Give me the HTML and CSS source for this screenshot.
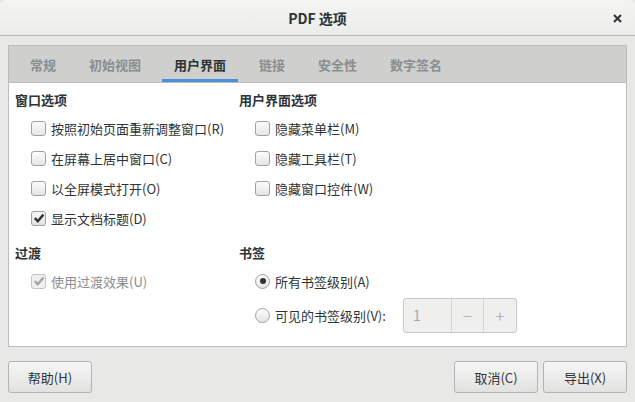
FILE: index.html
```html
<!DOCTYPE html>
<html lang="zh-CN">
<head>
<meta charset="utf-8">
<link rel="stylesheet" href="styles.css">
</head>
<body>
<div class="window">
  <div class="titlebar">
    <span class="title">PDF 选项</span>
    <span class="close">
      <svg width="9" height="9" viewBox="0 0 9 9"><path d="M1 1 L8 8 M8 1 L1 8" stroke="#2e3436" stroke-width="2" stroke-linecap="butt"/></svg>
    </span>
  </div>
  <div class="body">
    <div class="notebook">
      <div class="tabs">
        <span class="tab">常规</span>
        <span class="tab">初始视图</span>
        <span class="tab active">用户界面</span>
        <span class="tab">链接</span>
        <span class="tab">安全性</span>
        <span class="tab">数字签名</span>
      </div>
      <div class="page">
        <div class="grid">
          <div class="col">
            <div class="heading">窗口选项</div>
            <div class="rows">
              <div class="row"><span class="check"></span><span>按照初始页面重新调整窗口(R)</span></div>
              <div class="row"><span class="check"></span><span>在屏幕上居中窗口(C)</span></div>
              <div class="row"><span class="check"></span><span>以全屏模式打开(O)</span></div>
              <div class="row"><span class="check checked"><svg width="12" height="12" viewBox="0 0 12 12"><path d="M1.8 6.2 L4.8 9.2 L10.4 2.6" fill="none" stroke="#2e3436" stroke-width="2.4"/></svg></span><span>显示文档标题(D)</span></div>
            </div>
          </div>
          <div class="col">
            <div class="heading">用户界面选项</div>
            <div class="rows">
              <div class="row"><span class="check"></span><span>隐藏菜单栏(M)</span></div>
              <div class="row"><span class="check"></span><span>隐藏工具栏(T)</span></div>
              <div class="row"><span class="check"></span><span>隐藏窗口控件(W)</span></div>
            </div>
          </div>
          <div class="col section2">
            <div class="heading">过渡</div>
            <div class="rows">
              <div class="row disabled"><span class="check checked"><svg width="12" height="12" viewBox="0 0 12 12"><path d="M1.8 6.2 L4.8 9.2 L10.4 2.6" fill="none" stroke="#a4a6a6" stroke-width="2.4"/></svg></span><span>使用过渡效果(U)</span></div>
            </div>
          </div>
          <div class="col section2">
            <div class="heading">书签</div>
            <div class="rows">
              <div class="row"><span class="radio on"></span><span>所有书签级别(A)</span></div>
              <div class="row tall"><span class="radio"></span><span>可见的书签级别(V):</span>
                <div class="spin">
                  <span class="spin-entry">1</span>
                  <span class="spin-btn">−</span>
                  <span class="spin-btn">+</span>
                </div>
              </div>
            </div>
          </div>
        </div>
      </div>
    </div>
    <div class="buttons">
      <button class="btn">帮助(H)</button>
      <span class="spacer"></span>
      <button class="btn">取消(C)</button>
      <button class="btn">导出(X)</button>
    </div>
  </div>
</div>
</body>
</html>
```

FILE: styles.css
```css
* { box-sizing: border-box; }
html, body { margin: 0; padding: 0; }
body {
  width: 635px;
  height: 402px;
  background: #e8e8e7;
  font-family: "Noto Sans CJK SC", "Noto Sans", sans-serif;
  font-size: 13px;
  color: #2e3436;
  overflow: hidden;
}
.window { display: flex; flex-direction: column; height: 402px; }
.titlebar {
  height: 36px;
  flex: none;
  background: linear-gradient(#f4f4f3, #ececeb);
  border-bottom: 1px solid #b6b6b3;
  border-radius: 6px 6px 0 0;
  display: flex;
  align-items: center;
  justify-content: center;
  position: relative;
}
.title { font-size: 14px; font-weight: 600; color: #2e3436; }
.close {
  position: absolute;
  right: 13px;
  top: 14px;
  width: 9px;
  height: 9px;
  display: flex;
}
.body { flex: 1; display: flex; flex-direction: column; padding: 9px 8px 9px 8px; }
.notebook {
  border: 1px solid #bcbcba;
  display: flex;
  flex-direction: column;
  height: 302px;
  background: #fff;
}
.tabs {
  height: 37px;
  flex: none;
  background: #cfcfcd;
  border-bottom: 1px solid #bcbcba;
  display: flex;
  padding-left: 9px;
}
.tab {
  font-weight: 600;
  color: #8b8e8f;
  padding: 3px 12px 0 12px;
  margin-right: 9px;
  display: flex;
  align-items: center;
  border-bottom: 3px solid transparent;
}
.tab.active { color: #2e3436; border-bottom-color: #4a90d9; }
.page { flex: 1; padding: 7px 6px 0 6px; }
.grid { display: grid; grid-template-columns: 224px 1fr; }
.heading { font-weight: 600; height: 20px; line-height: 20px; }
.rows { padding-left: 16px; padding-top: 3px; }
.row { height: 30px; display: flex; align-items: center; gap: 5px; }
.row.tall { height: 38px; }
.section2 { padding-top: 10px; }
.check {
  width: 15px; height: 15px;
  border: 1px solid #a1a1a0;
  border-radius: 3px;
  background: linear-gradient(#fdfdfd, #e4e4e3);
  display: flex; align-items: center; justify-content: center;
  flex: none;
}
.check.checked { background: linear-gradient(#f8f8f8, #e2e2e1); }
.disabled { color: #8b8e8f; }
.disabled .check { border-color: #c4c4c3; background: #f0f0ef; }
.radio {
  width: 15px; height: 15px;
  border: 1px solid #a1a1a0;
  border-radius: 50%;
  background: linear-gradient(#fdfdfd, #e4e4e3);
  flex: none;
  display: flex; align-items: center; justify-content: center;
}
.radio.on::after {
  content: "";
  width: 6px; height: 6px; border-radius: 50%; background: #2e3436;
}
.spin {
  margin-left: 12px;
  display: flex;
  height: 35px;
  width: 114px;
  border: 1px solid #c9c9c8;
  border-radius: 3px;
  background: #efefee;
  color: #a5a7a7;
}
.spin-entry { width: 47px; padding-left: 9px; display: flex; align-items: center; font-size: 14px; }
.spin-btn {
  width: 33px; border-left: 1px solid #d6d6d5;
  display: flex; align-items: center; justify-content: center; font-size: 16px; color: #b4b6b6;
}
.buttons { display: flex; margin-top: 14px; gap: 5px; }
.spacer { flex: 1; }
.btn {
  width: 84px;
  height: 32px;
  font-family: inherit;
  font-size: 13px;
  color: #2e3436;
  border: 1px solid #b3b3b1;
  border-radius: 3px;
  background: linear-gradient(#f6f6f6, #e1e1e0);
  padding: 0;
}
```
